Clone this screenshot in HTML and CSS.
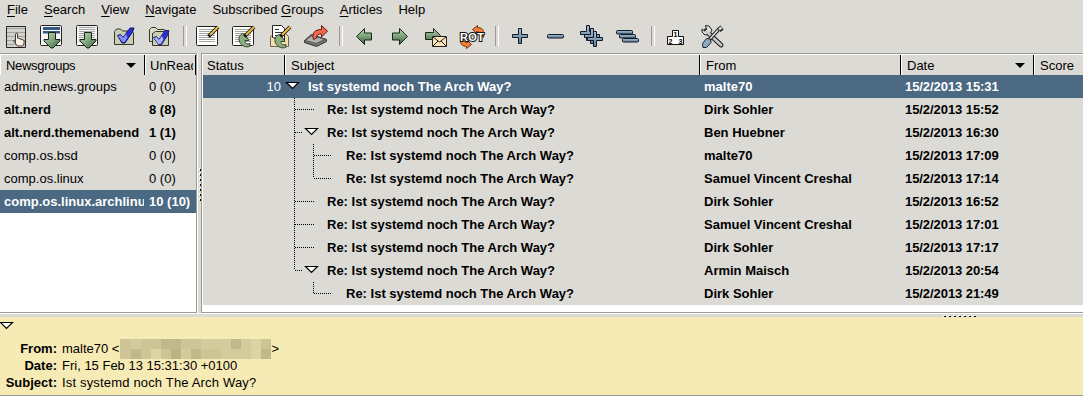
FILE: index.html
```html
<!DOCTYPE html>
<html lang="en">
<head>
<meta charset="utf-8">
<title>Newsreader</title>
<link rel="stylesheet" href="styles.css">
</head>
<body>
<svg class="defs" width="0" height="0">
  <defs>
    <linearGradient id="green" x1="0" y1="0" x2="1" y2="1"><stop offset="0" stop-color="#c4dac0"/><stop offset=".5" stop-color="#82a67d"/><stop offset="1" stop-color="#3d643d"/></linearGradient>
    <linearGradient id="greenv" x1="0" y1="0" x2="0" y2="1"><stop offset="0" stop-color="#b5d0b0"/><stop offset=".5" stop-color="#7da079"/><stop offset="1" stop-color="#375c36"/></linearGradient>
    <linearGradient id="steel" x1="0" y1="0" x2="0" y2="1"><stop offset="0" stop-color="#a9bdd0"/><stop offset="1" stop-color="#5f7d9c"/></linearGradient>
    <g id="lines"><path d="M9 9.500h16M9 11.500h16M9 13.500h16M9 15.500h16M9 17.500h16M9 19.500h16M9 21.500h16" stroke="#a5a5a5"/></g>
    <path id="down" d="M14.500 12.500h7v7h4.500v1.500l-7 7h-2l-7-7v-1.500h4.500z" fill="url(#green)" stroke="#142414"/>
    <g id="pencil"><path d="M18.500 16.500L28 7" stroke="#111" stroke-width="3.800"/><path d="M20 15L28 7" stroke="#f5c142" stroke-width="2"/></g>
    <path id="curl" d="M16.500 12.500c-4 2-4.500 7-2 10 2 3 6 4 9 3l.5-3c-3 1-5 0-5-3h4l-4-6z" fill="#8fae80" stroke="#344532"/>
    <path id="plus" d="M16.500 8.500h3v6h6v3h-6v6h-3v-6h-6v-3h6z" fill="url(#steel)" stroke="#111a24"/>
  </defs>
</svg>
<nav class="menubar">
  <span><u>F</u>ile</span><span><u>S</u>earch</span><span><u>V</u>iew</span><span><u>N</u>avigate</span><span>Subscribed <u>G</u>roups</span><span><u>A</u>rticles</span><span>Help</span>
</nav>
<div class="toolbar">
  <svg class="tool" viewBox="0 0 36 33"><path d="M8.500 6.500h19v21h-19z" fill="#d2d2cd" stroke="#222"/><path d="M9 8.500h18M9 12.500h18M9 16.500h18M9 20.500h18M9 24.500h18" stroke="#9ba59e"/><path d="M17.500 22.500v-8.500c1-1 2-1 2 0v4l6 2c1 1 1 4-1 6h-5l-4-5c0-1 1-1 2 0z" fill="#fff2e7" stroke="#42362e"/></svg>
  <svg class="tool" viewBox="0 0 36 33"><rect x="6.500" y="5.500" width="21" height="20" rx="1" fill="#f5f5f5" stroke="#222"/><path d="M9 8.500h17M9 12h17" stroke="#355982" stroke-width="3"/><path d="M9 10.500h17" stroke="#fff"/><use href="#down"/></svg>
  <svg class="tool" viewBox="0 0 36 33"><rect x="6.500" y="5.500" width="21" height="20" rx="1" fill="#f5f5f5" stroke="#222"/><path d="M9 7.500h16" stroke="#a5a5a5"/><use href="#lines"/><use href="#down"/></svg>
  <svg class="tool" viewBox="0 0 36 33"><path d="M8.500 24.500v-13l2-2.500h4l2 2h9l2 2v11.500z" fill="#c9ceb4" stroke="#333829"/><path d="M11.500 15.500l3-1 2.500 3 6-8 1-1.500h4l-1.500 4-7.500 11h-3z" fill="#292fdd" stroke="#15155c"/><path d="M12 16l2.500-1 2.500 3 3-4 1.500 3.500-3 4.500h-2z" fill="#8090ff"/></svg>
  <svg class="tool" viewBox="0 0 36 33"><path d="M7.500 21.500v-12l2-2h4l2 2h7l1 2v10z" fill="#d8dcc7" stroke="#333829"/><path d="M10.500 25.500v-12l3-2h13v14z" fill="#c9ceb4" stroke="#333829"/><path d="M11.500 17.500l3-1 2.500 3 6-9h4l-1.500 5-6 9h-3z" fill="#292fdd" stroke="#22225f"/><path d="M12 18l2.500-1 2.500 3 3-4 1.500 3.500-3 4.500h-2z" fill="#a9b4ff"/></svg>
  <i class="sep"></i>
  <svg class="tool" viewBox="0 0 36 33"><rect x="6.500" y="6.500" width="21" height="19" rx="1" fill="#fff" stroke="#222"/><use href="#lines"/><use href="#pencil"/></svg>
  <svg class="tool" viewBox="0 0 36 33"><rect x="6.500" y="6.500" width="21" height="19" rx="1" fill="#fff" stroke="#222"/><use href="#lines"/><use href="#curl" y="1"/><use href="#pencil"/></svg>
  <svg class="tool" viewBox="0 0 36 33"><path d="M8.500 26.500v-10l4-3h11l3 3v10z" fill="#f5ddb0" stroke="#72644c"/><path d="M10.500 17.500v-12h9l3 3v12z" fill="#fff" stroke="#222"/><path d="M13 9.500h4M13 12.500h7M13 15.500h6" stroke="#333"/><use href="#curl" y="2"/><use href="#pencil"/></svg>
  <svg class="tool" viewBox="0 0 36 33"><path d="M6.500 20.500l7-6 15 5v2l-10 5-12-4z" fill="#777873" stroke="#333"/><path d="M7 20.500l7-5 13 4-9 4z" fill="#b0b1aa" stroke="#555"/><path d="M15.500 19.500c-2-6 1-10 8-10V5.500l6 5.500-6 6v-3c-3-.5-5 1-5 4z" fill="#f4674c" stroke="#611c11"/></svg>
  <i class="sep"></i>
  <svg class="tool" viewBox="0 0 36 33"><path d="M10.500 16.500l8-8v4.500h7v7h-7v4.500z" fill="url(#greenv)" stroke="#172817"/></svg>
  <svg class="tool" viewBox="0 0 36 33"><path d="M25.500 16.500l-8-8v4.500h-7v7h7v4.500z" fill="url(#greenv)" stroke="#172817"/></svg>
  <svg class="tool" viewBox="0 0 36 33"><path d="M22.500 15.500l-7-7v4h-8v7h8v3z" fill="url(#greenv)" stroke="#172817"/><path d="M14.500 16.500h14v10h-14z" fill="#fce6b5" stroke="#222"/><path d="M15 17l6.500 5 6.500-5M15 26l5-5M28 26l-5-5" fill="none" stroke="#222"/></svg>
  <svg class="tool" viewBox="0 0 36 33"><path d="M18.500 9.500l5-4v2c4 0 6 2 6 5v5l-3-3c-1-3-2-3-4-3v2zM17.500 24.500l-5 4v-2c-3 0-6-2-6-5v-5l3 3c1 3 2 3 4 3v-2z" fill="#f47a38" stroke="#713613"/><text x="6" y="21" class="rot" textLength="24">ROT</text></svg>
  <i class="sep"></i>
  <svg class="tool" viewBox="0 0 36 33"><use href="#plus"/></svg>
  <svg class="tool" viewBox="0 0 36 33"><rect x="9.500" y="14.500" width="16" height="3.500" rx="1" fill="url(#steel)" stroke="#111a24"/></svg>
  <svg class="tool" viewBox="0 0 36 33"><use href="#plus" x="-4" y="-3"/><use href="#plus"/><use href="#plus" x="3" y="3"/></svg>
  <svg class="tool" viewBox="0 0 36 33"><g fill="url(#steel)" stroke="#111a24"><rect x="6.500" y="10.500" width="16" height="3.500" rx="1"/><rect x="9.500" y="14.500" width="16" height="3.500" rx="1"/><rect x="12.500" y="18.500" width="16" height="3.500" rx="1"/></g></svg>
  <i class="sep"></i>
  <svg class="tool" viewBox="0 0 36 33"><path d="M9.500 24.500v-8h5v-6h6v6h5v8z" fill="#fff" stroke="#111"/><g class="ranks"><text x="15.500" y="17">1</text><text x="10.500" y="23.500">2</text><text x="20.500" y="23.500">3</text></g></svg>
  <svg class="tool" viewBox="0 0 36 33"><path d="M12 11l15 14" stroke="#222" stroke-width="5" stroke-linecap="round"/><path d="M11.500 5.500l1 4-2 1.500-2.500-2v3l3 3 5-1 2-4-3-4z" fill="#ddd" stroke="#222"/><path d="M13 12l14 13" stroke="#c8c8c8" stroke-width="2.800" stroke-linecap="round"/><path d="M15 20l10-11" stroke="#222" stroke-width="3.500"/><path d="M25 10l3-2.500" stroke="#222" stroke-width="5"/><path d="M15 20l9-10" stroke="#eee" stroke-width="1.300"/><path d="M25 9.500l2.500-2" stroke="#ddd" stroke-width="2.500"/><path d="M8.500 23.500l4-5 4 .5.500 3.500-4.500 5h-3.500z" fill="#8eabc0" stroke="#18212b"/></svg>
</div>
<main class="panes">
  <section class="groups">
    <div class="head"><b class="hg">Newsgroups<i class="sort"></i></b><b class="hu"><span>UnRead</span></b></div>
    <div class="row"><span>admin.news.groups</span><span>0 (0)</span></div>
    <div class="row bold"><span>alt.nerd</span><span>8 (8)</span></div>
    <div class="row bold"><span>alt.nerd.themenabend</span><span>1 (1)</span></div>
    <div class="row"><span>comp.os.bsd</span><span>0 (0)</span></div>
    <div class="row"><span>comp.os.linux</span><span>0 (0)</span></div>
    <div class="row bold sel"><span>comp.os.linux.archlinux</span><span>10 (10)</span></div>
  </section>
  <div class="grip-v"><svg width="4" height="34" shape-rendering="crispEdges"><path d="M1.500 0v33" stroke="#fff" stroke-width="1" stroke-dasharray="2 3"/><path d="M3 1v32" stroke="#000" stroke-width="2" stroke-dasharray="2 3"/></svg></div>
  <section class="articles">
    <div class="head"><b>Status</b><b>Subject</b><b>From</b><b>Date<i class="sort"></i></b><b>Score</b></div>
    <div class="list">
      <svg class="tree" width="70" height="230">
        <g fill="none" stroke="#000" stroke-dasharray="1 1"><path d="M9.500 23v172M10 34.500h19M10 57.500h8M10 126.500h19M10 149.500h19M10 172.500h19M10 195.500h8M28.500 69v34M29 80.500h18M29 103.500h18M28.500 207v11M29 218.500h18"/></g>
        <g fill="#fff" stroke="#000" stroke-width="1.200"><path d="M1.500 7.500h12l-6 6zM20.500 53.500h12l-6 6zM20.500 191.500h12l-6 6z"/></g>
      </svg>
      <div class="art sel"><span>10</span><span>Ist systemd noch The Arch Way?</span><span>malte70</span><span>15/2/2013 15:31</span></div>
      <div class="art"><span></span><span class="d1">Re: Ist systemd noch The Arch Way?</span><span>Dirk Sohler</span><span>15/2/2013 15:52</span></div>
      <div class="art"><span></span><span class="d1">Re: Ist systemd noch The Arch Way?</span><span>Ben Huebner</span><span>15/2/2013 16:30</span></div>
      <div class="art"><span></span><span class="d2">Re: Ist systemd noch The Arch Way?</span><span>malte70</span><span>15/2/2013 17:09</span></div>
      <div class="art"><span></span><span class="d2">Re: Ist systemd noch The Arch Way?</span><span>Samuel Vincent Creshal</span><span>15/2/2013 17:14</span></div>
      <div class="art"><span></span><span class="d1">Re: Ist systemd noch The Arch Way?</span><span>Dirk Sohler</span><span>15/2/2013 16:52</span></div>
      <div class="art"><span></span><span class="d1">Re: Ist systemd noch The Arch Way?</span><span>Samuel Vincent Creshal</span><span>15/2/2013 17:01</span></div>
      <div class="art"><span></span><span class="d1">Re: Ist systemd noch The Arch Way?</span><span>Dirk Sohler</span><span>15/2/2013 17:17</span></div>
      <div class="art"><span></span><span class="d1">Re: Ist systemd noch The Arch Way?</span><span>Armin Maisch</span><span>15/2/2013 20:54</span></div>
      <div class="art"><span></span><span class="d2">Re: Ist systemd noch The Arch Way?</span><span>Dirk Sohler</span><span>15/2/2013 21:49</span></div>
    </div>
  </section>
</main>
<div class="grip-h"><svg width="34" height="4" shape-rendering="crispEdges"><path d="M0 1.500h33" stroke="#fff" stroke-dasharray="2 3"/><path d="M1 3h32" stroke="#000" stroke-width="2" stroke-dasharray="2 3"/></svg></div>
<section class="message">
  <svg class="fold" width="14" height="9"><path d="M.5 1.500h12l-6 6z" fill="#fff" stroke="#000" stroke-width="1.200"/></svg>
  <dl>
    <dt>From:</dt><dd>malte70 &lt;<svg class="mosaic" width="151" height="20" shape-rendering="crispEdges"><rect width="151" height="20" fill="#cdc596"/><path d="M11 0h10v10H11zM81 0h30v10H81zM61 10h10v10H61zM121 0h10v20h-10zM101 10h20v10h-20z" fill="#d3cb9c"/><path d="M41 0h20v10H41zM11 10h10v10H11zM111 0h10v10h-10zM141 10h10v10h-10zM71 10h10v10H71z" fill="#c1b98b"/><path d="M51 10h10v10H51z" fill="#bab383"/><path d="M31 10h10v10H31zM131 0h10v20h-10z" fill="#dcd5a2"/></svg>&gt;</dd>
    <dt>Date:</dt><dd>Fri, 15 Feb 13 15:31:30 +0100</dd>
    <dt>Subject:</dt><dd class="subject">Ist systemd noch The Arch Way?</dd>
  </dl>
</section>
</body>
</html>
```

FILE: styles.css
```css
* { box-sizing: border-box; }
body { margin: 0; width: 1083px; height: 401px; overflow: hidden; background: #fff; color: #000; font: 13px/23px "Liberation Sans", Arial, sans-serif; white-space: nowrap; }
.defs { position: absolute; }
.menubar { display: flex; gap: 16px; height: 20px; padding-left: 7px; line-height: 19px; background: #dcdad5; }
.menubar u { text-underline-offset: 2px; }
.toolbar { display: flex; height: 33px; background: #dcdad5; }
.tool { width: 36px; height: 33px; flex: none; }
.tool:first-child { margin-left: -2px; }
.sep { width: 12px; height: 20px; margin-top: 6px; padding-left: 5px; }
.sep::before { content: ""; display: block; width: 2px; height: 20px; border-left: 1px solid #9c9a94; border-right: 1px solid #fff; }
.rot { font: bold 11px "Liberation Sans", sans-serif; fill: #fff; stroke: #111; stroke-width: 2px; paint-order: stroke; }
.ranks { font: bold 7px "Liberation Sans", sans-serif; }
.panes { display: flex; height: 260px; background: #dcdad5; }
.groups { flex: none; width: 197px; border: solid #9c9a94; border-width: 1px 1px 1px 0; background: #fff; overflow: hidden; }
.head { display: flex; height: 21px; background: #dcdad5; border-top: 1px solid #fff; }
.head b { position: relative; font-weight: 400; line-height: 21px; border-right: 1px solid #000; border-left: 1px solid #fff; padding-left: 4px; }
.head .hg { width: 145px; padding-left: 5px; letter-spacing: -.3px; }
.hu { width: 51px; }
.hu span { display: block; width: 43px; overflow: hidden; }
.sort { position: absolute; right: 8px; top: 8px; border: solid transparent; border-width: 5px 5px 0; border-top-color: #000; }
.row { display: grid; grid-template-columns: 144px 52px; height: 23px; padding-left: 4px; background: #dcdad5; }
.row span { overflow: hidden; }
.row span:first-child { width: 140px; }
.row span + span { padding-left: 1px; }
.bold { font-weight: 700; }
.sel { color: #fff; }
.row.sel, .art.sel { background: #4b6983; }
.grip-v { flex: none; width: 4px; padding-top: 115px; border-left: 1px solid #fff; line-height: 0; }
.articles { flex: 1; min-width: 0; border: solid #9c9a94; border-width: 1px 0 1px 1px; background: #fff; }
.articles .head b { padding-left: 5px; }
.articles .head b:nth-child(1) { width: 83px; }
.articles .head b:nth-child(2) { width: 415px; }
.articles .head b:nth-child(3) { width: 201px; }
.articles .head b:nth-child(4) { width: 133px; }
.articles .head b:nth-child(5) { flex: 1; border-right: 0; }
.articles .head b:nth-child(1) { padding-left: 4px; }
.list { position: relative; margin-left: 1px; }
.tree { position: absolute; left: 82px; top: 0; }
.art { display: grid; grid-template-columns: 78px 423px 201px 178px; height: 23px; background: #dcdad5; font-weight: 700; }
.art span:first-child { text-align: right; font-weight: 400; }
.art span:nth-child(2) { padding-left: 27px; }
.art span:nth-child(4) { letter-spacing: -.07px; }
.art .d1.d1 { padding-left: 46px; }
.art .d2.d2 { padding-left: 65px; }
.grip-h { height: 4px; background: #dcdad5; border-top: 1px solid #fff; line-height: 0; padding-left: 943px; overflow: hidden; }
.grip-h svg { margin-top: -1px; }
.message { height: 79px; padding-top: 4px; background: #f7ebb5; border-bottom: 1px solid #9c9a94; }
.fold { display: block; }
.message dl { display: grid; grid-template-columns: 57px 1fr; column-gap: 5px; margin: 0; padding-top: 10px; line-height: 17px; }
dt { text-align: right; font-weight: 700; height: 17px; }
dd { margin: 0; display: flex; height: 17px; }
.subject { letter-spacing: .17px; }
.mosaic { margin: -1px 0 0 1px; }
```
